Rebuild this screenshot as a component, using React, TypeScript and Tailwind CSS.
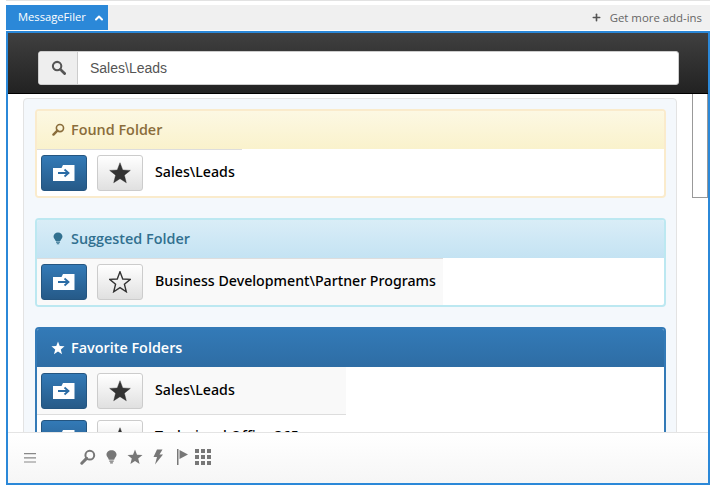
import { ChevronUp, Plus } from 'lucide-react';
import type { ReactNode } from 'react';

const STAR = 'M8 0.500l2 5.300 5.500.3-4.300 3.500 1.400 5.500L8 12.100l-4.600 3 1.400-5.500L0.500 6.100l5.500-.3z';

function SearchIcon({ className }: { className: string }) {
    return (
        <svg viewBox="0 0 16 16" className={className} fill="none" stroke="currentColor">
            <circle cx="9.800" cy="6.200" r="4.400" strokeWidth="2" />
            <path d="M6.600 9.400L1.800 14.200" strokeWidth="3" strokeLinecap="round" />
        </svg>
    );
}

function BulbIcon({ className }: { className: string }) {
    return (
        <svg viewBox="0 0 12 16" className={className} fill="currentColor">
            <path d="M6 0.500c-3.200 0-5.500 2.100-5.500 4.900 0 2.200 1.900 3.500 2.600 5.600h5.800c.7-2.100 2.600-3.400 2.600-5.600C11.500 2.600 9.200 0.500 6 0.500z" />
            <path d="M3.600 11.800h4.800v1.300H3.600zM4.500 13.800h3v1.400h-3z" />
        </svg>
    );
}

function FolderButton() {
    return (
        <button className="flex h-9 w-[46px] shrink-0 items-center justify-center rounded-[3px] border border-[#245580] bg-gradient-to-b from-[#337ab7] to-[#265a88]">
            <svg viewBox="0 0 22 16" className="h-4 w-[22px]">
                <path d="M0 3h8.500L10 0h11.500v16H0z" fill="#fff" />
                <path d="M5 8h10M11.500 4.500L15.500 8l-4 3.500" fill="none" stroke="#2b6ca5" strokeWidth="1.800" />
            </svg>
        </button>
    );
}

function StarButton({ filled }: { filled: boolean }) {
    return (
        <button className="flex h-9 w-[46px] shrink-0 items-center justify-center rounded-[3px] border border-[#ccc] bg-gradient-to-b from-white to-[#e0e0e0]">
            <svg viewBox="0 0 16 16" className="size-[22px]">
                <path d={STAR} fill={filled ? '#333' : 'none'} stroke="#333" strokeWidth={filled ? 0.3 : 1} />
            </svg>
        </button>
    );
}

function FolderRow({
    name,
    filled,
    className,
    nameClass = '-mt-0.5',
}: {
    name: string;
    filled: boolean;
    className: string;
    nameClass?: string;
}) {
    return (
        <div className={`flex items-center gap-2.5 pr-[7px] pl-1 ${className}`}>
            <FolderButton />
            <StarButton filled={filled} />
            <span className={`ml-0.5 font-['Noto_Sans',sans-serif] text-[14.2px] font-medium whitespace-nowrap text-black ${nameClass}`}>
                {name}
            </span>
        </div>
    );
}

function Panel({
    title,
    icon,
    frame,
    head,
    children,
}: {
    title: string;
    icon: ReactNode;
    frame: string;
    head: string;
    children: ReactNode;
}) {
    return (
        <section className={`overflow-hidden rounded-[4px] border-2 bg-white ${frame}`}>
            <div className={`flex h-[38px] items-center gap-1.5 pb-px pl-[14px] text-[14.4px] font-semibold ${head}`}>
                <span className="flex w-[14px] justify-center">{icon}</span>
                {title}
            </div>
            {children}
        </section>
    );
}

export default function App() {
    return (
        <div className="h-[489px] w-[714px] overflow-hidden bg-white pl-1.5 font-['Open_Sans',sans-serif]">
            <div className="mr-1 h-px bg-[#e2e2e2]" />
            <div className="mt-1 mr-1 flex h-[25px] items-center justify-between bg-[#f0f0f0] pr-2">
                <div className="flex h-full w-[102px] items-center gap-[7px] bg-[#2b88d8] pl-3 text-[11.2px] text-white">
                    MessageFiler
                    <ChevronUp className="size-3" strokeWidth={4} />
                </div>
                <div className="flex items-center gap-2 text-[11.4px] text-[#666]">
                    <Plus className="size-[11px] text-[#555]" strokeWidth={3.5} />
                    Get more add-ins
                </div>
            </div>
            <div className="relative mt-px mr-1 flex h-[454px] flex-col overflow-hidden border-2 border-[#2b88d8]">
                <header className="flex h-[61px] shrink-0 items-center border-b border-black bg-gradient-to-b from-[#404040] to-[#222] pt-[9px] pr-[29px] pl-[30px]">
                    <div className="flex h-[34px] w-full overflow-hidden rounded-[3px] border border-[#ccc] bg-white">
                        <div className="flex w-[39px] items-center justify-center border-r border-[#ccc] bg-[#eee] text-[#555]">
                            <svg viewBox="0 0 16 16" className="size-[15px]" fill="none" stroke="currentColor">
                                <circle cx="6.500" cy="6.500" r="4.500" strokeWidth="2.200" />
                                <path d="M10 10l4.500 4.500" strokeWidth="3" strokeLinecap="round" />
                            </svg>
                        </div>
                        <div className="flex items-center pt-0.5 pl-3 font-['Liberation_Sans',sans-serif] text-[14px] text-[#555]">
                            Sales\Leads
                        </div>
                    </div>
                </header>
                <main className="relative min-h-0 flex-1 overflow-hidden pt-1 pl-[15px]">
                    <div className="flex h-[400px] w-[654px] flex-col gap-5 rounded-[4px] border border-[#e3e3e3] bg-[#f4f8fc] pt-[10px] pr-[10px] pl-[11px]">
                        <Panel
                            title="Found Folder"
                            icon={<SearchIcon className="size-[13px]" />}
                            frame="border-[#faebcc]"
                            head="bg-gradient-to-b from-[#fcf8e3] to-[#faf2cc] text-[#8a6d3b]"
                        >
                            <FolderRow
                                name="Sales\Leads"
                                filled
                                className="h-[47px] w-fit border-t border-[#ddd] bg-white"
                            />
                        </Panel>
                        <Panel
                            title="Suggested Folder"
                            icon={<BulbIcon className="h-[13px] w-[10px]" />}
                            frame="border-[#bce8f1]"
                            head="bg-gradient-to-b from-[#d9edf7] to-[#c4e3f3] text-[#31708f]"
                        >
                            <FolderRow
                                name="Business Development\Partner Programs"
                                filled={false}
                                className="h-[47px] w-fit border-t border-[#ddd] bg-[#f9f9f9]"
                            />
                        </Panel>
                        <section className="overflow-hidden rounded-[4px] border-2 border-[#337ab7] bg-white">
                            <div className="flex h-[38px] items-center gap-1.5 bg-gradient-to-b from-[#337ab7] to-[#2e6da4] pb-px pl-[14px] text-[14.4px] font-semibold text-white">
                                <svg viewBox="0 0 16 16" className="size-[14px]">
                                    <path d={STAR} fill="#fff" />
                                </svg>
                                Favorite Folders
                            </div>
                            <div className="w-[309px]">
                                <FolderRow
                                    name="Sales\Leads"
                                    filled
                                    className="h-[48px] border-b border-[#ddd] bg-[#f9f9f9] pt-px"
                                />
                                <FolderRow
                                    name="Technicool Office 365"
                                    filled
                                    nameClass="-mt-1"
                                    className="h-[46px] bg-white"
                                />
                            </div>
                        </section>
                    </div>
                    <div className="absolute top-0 right-0 h-[104px] w-4 border border-t-0 border-[#999] bg-white" />
                </main>
                <footer className="z-10 flex h-[51px] shrink-0 items-center border-t border-[#e4e4e4] bg-gradient-to-b from-white to-[#f6f6f6] pl-4 text-[#777]">
                    <svg viewBox="0 0 12 10" className="h-2.5 w-3 text-[#888]" fill="currentColor">
                        <path d="M0 0h12v1.200H0zM0 4.200h12v1.200H0zM0 8.400h12v1.200H0z" />
                    </svg>
                    <div className="mb-0.5 ml-11 flex items-center gap-[10px]">
                        <SearchIcon className="size-4" />
                        <BulbIcon className="h-4 w-[11px]" />
                        <svg viewBox="0 0 16 16" className="size-4" fill="currentColor">
                            <path d={STAR} />
                        </svg>
                        <svg viewBox="0 0 10 16" className="h-4 w-2.5" fill="currentColor">
                            <path d="M4 0.500h5.500L6.500 5.500H10L2 15.500l2-7.500H0.500z" />
                        </svg>
                        <div className="ml-1 flex items-center gap-[7px]">
                            <svg viewBox="0 0 11 16" className="h-4 w-[11px]" fill="currentColor">
                                <path d="M0 0h1.500v16H0zM2.500 1l8.500 4.500-8.500 4.500z" />
                            </svg>
                            <svg viewBox="0 0 16 16" className="size-4" fill="currentColor">
                                <path d="M0 0h4v4H0zM6 0h4v4H6zM12 0h4v4h-4zM0 6h4v4H0zM6 6h4v4H6zM12 6h4v4h-4zM0 12h4v4H0zM6 12h4v4H6zM12 12h4v4h-4z" />
                            </svg>
                        </div>
                    </div>
                </footer>
            </div>
        </div>
    );
}
